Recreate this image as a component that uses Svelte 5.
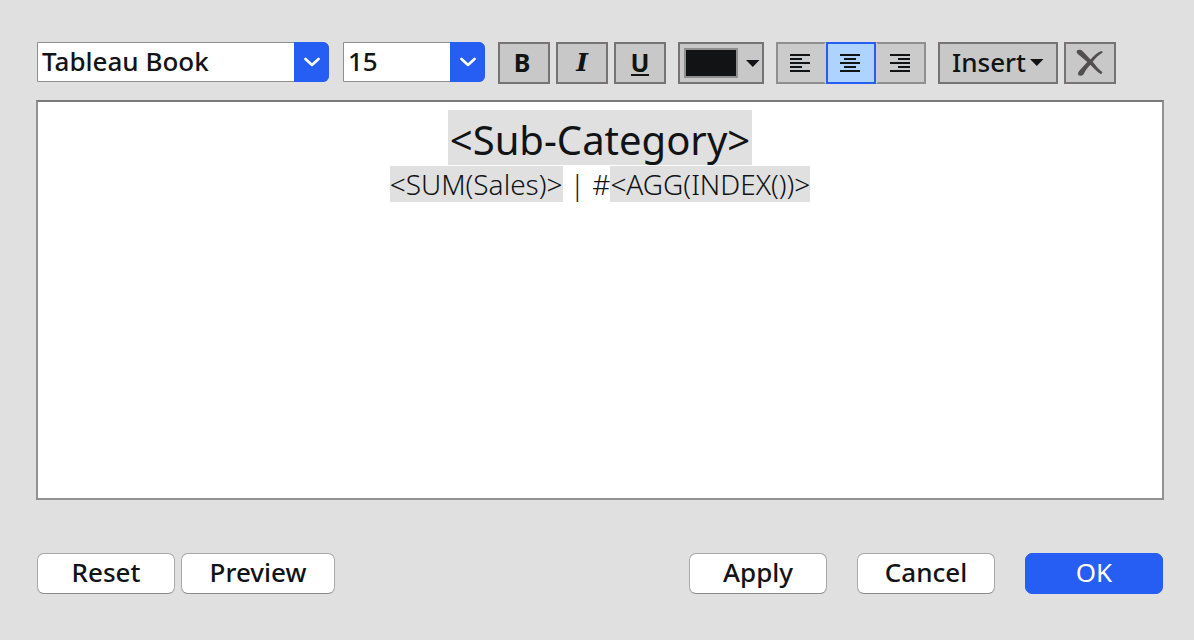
<script>
  let family = $state('Tableau Book');
  let size = $state('15');
  let align = $state('center');

  const families = ['Tableau Book', 'Tableau Light', 'Tableau Medium', 'Tableau Bold'];
  const sizes = ['8', '9', '10', '12', '15', '18', '24'];
  const alignments = [
    { id: 'left', label: 'Align left', d: 'M0 1h20M0 5h12M0 9h20M0 13h12M0 17h20' },
    { id: 'center', label: 'Align center', d: 'M0 1h20M4 5h12M0 9h20M4 13h12M0 17h20' },
    { id: 'right', label: 'Align right', d: 'M0 1h20M8 5h12M0 9h20M8 13h12M0 17h20' }
  ];
</script>

{#snippet chevron()}
  <span class="drop" aria-hidden="true">
    <svg width="16" height="10" viewBox="0 0 16 10">
      <path d="M1.500 2l6.500 6 6.500-6" fill="none" stroke="#fff" stroke-width="2.6" stroke-linecap="round" stroke-linejoin="round" />
    </svg>
  </span>
{/snippet}

{#snippet caret()}
  <svg width="14" height="7" viewBox="0 0 14 7" aria-hidden="true"><path d="M0 0h13.5L6.8 7z" fill="#111315" /></svg>
{/snippet}

<main class="dialog">
  <div class="toolbar" role="toolbar" aria-label="Formatting">
    <div class="combos">
      <div class="combo family">
        <select aria-label="Font" bind:value={family}>
          {#each families as f}<option>{f}</option>{/each}
        </select>
        {@render chevron()}
      </div>
      <div class="combo size">
        <select aria-label="Font size" bind:value={size}>
          {#each sizes as s}<option>{s}</option>{/each}
        </select>
        {@render chevron()}
      </div>
    </div>

    <div class="group">
      <button class="tool square bold" type="button" aria-label="Bold">B</button>
      <button class="tool square italic" type="button" aria-label="Italic">I</button>
      <button class="tool square underline" type="button" aria-label="Underline"><span>U</span></button>
    </div>

    <button class="tool color" type="button" aria-label="Text color">
      <span class="swatch"></span>
      {@render caret()}
    </button>

    <div class="segments">
      {#each alignments as a}
        <button
          class="segment"
          class:active={align === a.id}
          type="button"
          aria-label={a.label}
          aria-pressed={align === a.id}
          onclick={() => (align = a.id)}
        >
          <svg width="20" height="18" viewBox="0 0 20 18" aria-hidden="true"><path d={a.d} stroke="#111315" stroke-width="2" /></svg>
        </button>
      {/each}
    </div>

    <div class="group">
      <button class="tool insert" type="button">Insert {@render caret()}</button>
      <button class="tool square" type="button" aria-label="Clear">
        <svg width="28" height="28" viewBox="0 0 28 28" aria-hidden="true">
          <path
            d="M1 1.500C2.500 0 5.500 .5 7 2.500L14.500 10.500C18 6.500 21.500 3.300 25.500 2L27 3.300C23 5.500 19.500 9 16.700 12.700C19.500 16.500 23 20.500 26.500 23.300L25 25.300C21 22.500 17.500 19 14.300 15.700C11.500 19 9.300 21.500 7.800 25C6.500 27 3.500 27.300 2.300 26C1.500 24.500 2.500 22.500 4 21C6.300 18.500 9 15.700 11.300 13L3 6C1 4.500 0 3 1 1.500Z"
            fill="#504e4f"
          />
        </svg>
      </button>
    </div>
  </div>

  <div class="editor" class:left={align === 'left'} class:right={align === 'right'} contenteditable="true" role="textbox" aria-multiline="true" aria-label="Label text" tabindex="0" spellcheck="false">
    <p class="title"><span class="field">{'<Sub-Category>'}</span></p>
    <p class="detail"><span class="field">{'<SUM(Sales)>'}</span>{' | #'}<span class="field">{'<AGG(INDEX())>'}</span></p>
  </div>

  <footer class="actions">
    <div class="start">
      <button class="push" type="button">Reset</button>
      <button class="push wide" type="button">Preview</button>
    </div>
    <div class="end">
      <button class="push" type="button">Apply</button>
      <button class="push" type="button">Cancel</button>
      <button class="push primary" type="button">OK</button>
    </div>
  </footer>
</main>

<style>
  :global(body) {
    margin: 0;
    background: #e0e0e0;
  }

  .dialog {
    box-sizing: border-box;
    min-height: 100vh;
    padding: 42px 30px 46px 36px;
    display: flex;
    flex-direction: column;
    background: #e0e0e0;
    color: #111315;
    font-family: 'Noto Sans', 'Open Sans', sans-serif;
    font-size: 26px;
    font-weight: 500;
    line-height: 36px;
  }

  button,
  select {
    box-sizing: border-box;
    margin: 0;
    font: inherit;
    color: inherit;
  }

  .toolbar {
    display: flex;
    gap: 12px;
    padding-left: 1px;
    margin-bottom: 16px;
  }

  .combos {
    display: flex;
    gap: 14px;
    padding-right: 1px;
  }

  .combo {
    display: grid;
    height: 40px;
  }

  .combo.family {
    width: 292px;
  }

  .combo.size {
    width: 142px;
  }

  .combo select {
    grid-area: 1 / 1;
    width: 100%;
    height: 40px;
    padding: 0 40px 2px 4px;
    border: 1px solid #8f8f8f;
    border-radius: 0 6px 6px 0;
    background: #fff;
    appearance: none;
  }

  .drop {
    grid-area: 1 / 1;
    justify-self: end;
    width: 35px;
    display: flex;
    align-items: center;
    justify-content: center;
    border-radius: 0 6px 6px 0;
    background: #265df2;
    pointer-events: none;
  }

  .group {
    display: flex;
    gap: 6px;
  }

  .tool {
    height: 42px;
    padding: 0;
    display: flex;
    align-items: center;
    justify-content: center;
    border: 2px solid #757373;
    background: #c8c8c8;
  }

  .square {
    width: 52px;
  }

  .bold,
  .italic,
  .underline {
    font-size: 25px;
    font-weight: 700;
  }

  .bold {
    padding: 0 4px 2px 0;
  }

  .italic {
    font-family: 'DejaVu Serif', serif;
    font-style: italic;
  }

  .underline span {
    line-height: 24px;
    border-bottom: 2px solid #111315;
  }

  .color {
    width: 86px;
    gap: 8px;
    padding-left: 2px;
  }

  .swatch {
    width: 50px;
    height: 26px;
    border: 2px solid #8f8f8f;
    background: #111315;
  }

  .segments {
    display: flex;
  }

  .segment {
    width: 50px;
    height: 42px;
    padding: 0 2px 0 0;
    display: flex;
    align-items: center;
    justify-content: center;
    border: 2px solid #8f8f8f;
    background: #cbcbcb;
  }

  .segment:first-child:not(.active) {
    border-right-color: #cbcbcb;
  }

  .segment:last-child:not(.active) {
    border-left-color: #cbcbcb;
  }

  .segment.active {
    border-color: #265df2;
    background: #aed3ff;
  }

  .insert {
    width: 120px;
    gap: 4px;
    padding-bottom: 2px;
  }

  .editor {
    flex: 1;
    box-sizing: border-box;
    min-height: 240px;
    padding: 8px 12px;
    border: 2px solid #929292;
    border-top-color: #7b7979;
    background: #fff;
    text-align: center;
    outline: none;
  }

  .editor.left {
    text-align: left;
  }

  .editor.right {
    text-align: right;
  }

  .editor p {
    margin: 0;
  }

  .title {
    font-size: 40px;
    font-weight: 400;
    line-height: 56px;
  }

  .detail {
    font-size: 28px;
    font-weight: 300;
    line-height: 36px;
  }

  .field {
    display: inline-block;
    background: #e0e0e0;
  }

  .title .field {
    box-sizing: border-box;
    height: 55px;
    padding: 2px 2px 0;
    line-height: 56px;
    vertical-align: top;
  }

  .actions {
    display: flex;
    flex-wrap: wrap;
    justify-content: space-between;
    gap: 12px;
    margin-top: 53px;
    padding: 0 1px;
  }

  .start {
    display: flex;
    gap: 6px;
  }

  .end {
    display: flex;
    gap: 30px;
  }

  .push {
    width: 138px;
    height: 41px;
    padding: 0 0 4px;
    border: 1px solid #a8a8a8;
    border-bottom-color: #8a8a8a;
    border-radius: 7px;
    background: #fff;
  }

  .push.wide {
    width: 154px;
  }

  .push.primary {
    border-color: #265df2;
    background: #265df2;
    color: #fff;
    font-weight: 400;
  }
</style>
